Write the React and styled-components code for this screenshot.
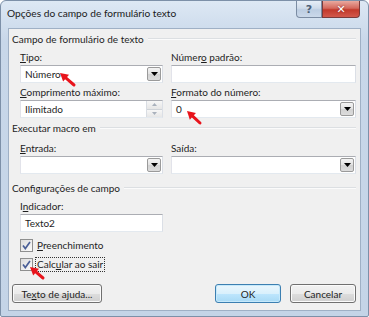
import React from 'react';
import styled, { createGlobalStyle } from 'styled-components';

const GlobalStyle = createGlobalStyle`
  body { margin: 0; background: #fff; }
`;

const FONT = `"Lato", "Liberation Sans", sans-serif`;

const Window = styled.div`
  position: relative;
  width: 369px;
  height: 317px;
  box-sizing: border-box;
  display: flex;
  flex-direction: column;
  background: linear-gradient(#dde8f4, #c8d7e9 40px, #c4d4e7);
  border: 1px solid #7d90a8;
  border-radius: 6px 6px 2px 2px;
  font-family: ${FONT};
  font-size: 10px;
  color: #1e1e1e;
  overflow: hidden;
`;

const TitleBar = styled.div`
  height: 27px;
  display: flex;
  align-items: flex-start;
  flex-shrink: 0;
`;

const Caption = styled.div`
  flex: 1;
  padding: 5px 0 0 6px;
  font-size: 10.2px;
  line-height: 14px;
  color: #1a1a1a;
`;

const CaptionButtons = styled.div`
  display: flex;
  margin-right: 8px;
`;

const CaptionButton = styled.div`
  width: ${p => p.$w}px;
  height: 17px;
  box-sizing: border-box;
  display: flex;
  align-items: center;
  justify-content: center;
  border: 1px solid ${p => (p.$close ? '#7a3a3a' : '#7b8ca3')};
  border-top: none;
  border-radius: ${p => (p.$close ? '0 0 4px 0' : '0 0 0 4px')};
  background: ${p =>
    p.$close
      ? 'linear-gradient(#e9a99f, #d4695d 45%, #c2392b 55%, #d2584c)'
      : 'linear-gradient(#e6eef7, #cfdbea 45%, #bccde2 55%, #cbd9ea)'};
  color: ${p => (p.$close ? '#fff' : '#4d5f77')};
  font-family: "DejaVu Sans", sans-serif;
  font-weight: bold;
  font-size: ${p => (p.$close ? 11 : 11)}px;
  text-shadow: ${p => (p.$close ? '0 0 2px #7a2018' : 'none')};
`;

const Client = styled.div`
  flex: 1;
  margin: 0 7px 5px 7px;
  background: #f0f0f0;
  border: 1px solid #9fb0c5;
  padding: 3px 4px 0 3px;
  display: flex;
  flex-direction: column;
`;

const GroupHeader = styled.div`
  display: flex;
  align-items: center;
  gap: 4px;
  height: 14px;
  line-height: 14px;
  margin-top: ${p => p.$mt || 0}px;
  &::after {
    content: '';
    flex: 1;
    height: 0;
    border-top: 1px solid #dcdfe2;
    border-bottom: 1px solid #fbfbfb;
  }
`;

const Section = styled.div`
  padding-left: 8px;
  margin-top: ${p => p.$mt || 0}px;
`;

const FieldGrid = styled.div`
  display: grid;
  grid-template-columns: 143px 185px;
  column-gap: 8px;
  row-gap: 2px;
`;

const Field = styled.div`
  display: flex;
  flex-direction: column;
  width: ${p => (p.$w ? `${p.$w}px` : 'auto')};
`;

const Label = styled.div`
  height: 14px;
  line-height: 14px;
  white-space: nowrap;
`;

const U = styled.span`
  text-decoration: underline;
  text-underline-offset: 1px;
`;

const Input = styled.div`
  margin-top: 1px;
  height: 18px;
  box-sizing: border-box;
  display: flex;
  align-items: center;
  background: #fff;
  border: 1px solid #abadb3;
  border-color: #abadb3 #dbdfe6 #e3e9ef #e2e3ea;
  padding-left: 4px;
  line-height: 14px;
`;

const InputText = styled.div`
  flex: 1;
`;

const DropButton = styled.div`
  width: 14px;
  height: 14px;
  margin-right: 1px;
  box-sizing: border-box;
  border: 1px solid #9a9a9a;
  border-radius: 2px;
  background: linear-gradient(#f4f4f4, #e2e2e2 50%, #d2d2d2 51%, #dcdcdc);
  display: flex;
  align-items: center;
  justify-content: center;
`;

const SpinStack = styled.div`
  width: 15px;
  height: 16px;
  display: flex;
  flex-direction: column;
  border-left: 1px solid #d9dde3;
`;

const SpinHalf = styled.div`
  flex: 1;
  display: flex;
  align-items: center;
  justify-content: center;
  background: linear-gradient(#f7f7f7, #e6e6e6);
  border-bottom: ${p => (p.$top ? '1px solid #cfd3d8' : 'none')};
`;

const CheckRow = styled.div`
  display: flex;
  align-items: center;
  gap: 2px;
  height: 14px;
  margin-top: ${p => p.$mt || 0}px;
`;

const CheckBox = styled.div`
  width: 13px;
  height: 13px;
  box-sizing: border-box;
  border: 1px solid #8e8f8f;
  background: linear-gradient(135deg, #dcdcdc, #fbfbfb);
  display: flex;
  align-items: center;
  justify-content: center;
`;

const CheckLabel = styled.div`
  line-height: 13px;
  padding: 0 1px;
  border: 1px ${p => (p.$focus ? 'dotted #333' : 'solid transparent')};
`;

const ButtonRow = styled.div`
  display: flex;
  align-items: center;
  margin-top: 13px;
  gap: 9px;
`;

const Spacer = styled.div`
  flex: 1;
`;

const Button = styled.div`
  width: ${p => p.$w}px;
  height: 19px;
  box-sizing: border-box;
  display: flex;
  align-items: center;
  justify-content: center;
  border: 1px solid ${p => (p.$default ? '#3c7fb1' : '#707070')};
  border-radius: 3px;
  box-shadow: inset 0 0 0 1px ${p => (p.$default ? '#c6e9fb' : '#fbfbfb')};
  background: ${p =>
    p.$default
      ? 'linear-gradient(#eaf6fd, #d9f0fc 50%, #bee6fd 51%, #a7d9f5)'
      : 'linear-gradient(#f2f2f2, #ebebeb 50%, #dddddd 51%, #cfcfcf)'};
  white-space: nowrap;
`;

const Overlay = styled.svg`
  position: absolute;
  left: 0;
  top: 0;
  pointer-events: none;
`;

function Caret({ color = '#000' }) {
  return (
    <svg width="7" height="4" viewBox="0 0 7 4">
      <path d="M0 0H7L3.5 4Z" fill={color} />
    </svg>
  );
}

function Combo({ value }) {
  return (
    <Input>
      <InputText>{value}</InputText>
      <DropButton>
        <Caret />
      </DropButton>
    </Input>
  );
}

function Spinner({ value }) {
  return (
    <Input>
      <InputText>{value}</InputText>
      <SpinStack>
        <SpinHalf $top>
          <svg width="5" height="3" viewBox="0 0 5 3"><path d="M0 3H5L2.5 0Z" fill="#a9b1bc" /></svg>
        </SpinHalf>
        <SpinHalf>
          <svg width="5" height="3" viewBox="0 0 5 3"><path d="M0 0H5L2.5 3Z" fill="#a9b1bc" /></svg>
        </SpinHalf>
      </SpinStack>
    </Input>
  );
}

function Check({ children, focus, mt }) {
  return (
    <CheckRow $mt={mt}>
      <CheckBox>
        <svg width="9" height="9" viewBox="0 0 9 9">
          <path d="M1 4.5L3.3 7.5L8 1" fill="none" stroke="#4a5f97" strokeWidth="1.7" />
        </svg>
      </CheckBox>
      <CheckLabel $focus={focus}>{children}</CheckLabel>
    </CheckRow>
  );
}

function arrowPath(tx, ty, hx, hy) {
  const dx = hx - tx;
  const dy = hy - ty;
  const len = Math.hypot(dx, dy);
  const ux = dx / len;
  const uy = dy / len;
  const size = 8;
  const bx = hx - ux * size;
  const by = hy - uy * size;
  const px = -uy * 4.5;
  const py = ux * 4.5;
  return {
    line: `M${tx} ${ty}L${bx} ${by}`,
    head: `M${hx} ${hy}L${bx + px} ${by + py}L${bx - px} ${by - py}Z`,
  };
}

const arrows = [
  [73, 84, 59, 72],
  [199, 122, 186, 110],
  [42, 277, 29, 266],
];

export default function App() {
  return (
    <>
      <GlobalStyle />
      <Window>
        <TitleBar>
          <Caption>Opções do campo de formulário texto</Caption>
          <CaptionButtons>
            <CaptionButton $w={26}>?</CaptionButton>
            <CaptionButton $w={38} $close>✕</CaptionButton>
          </CaptionButtons>
        </TitleBar>
        <Client>
          <GroupHeader>Campo de formulário de texto</GroupHeader>
          <Section $mt={4}>
            <FieldGrid>
              <Field>
                <Label><U>T</U>ipo:</Label>
                <Combo value="Número" />
              </Field>
              <Field>
                <Label>Númer<U>o</U> padrão:</Label>
                <Input />
              </Field>
              <Field>
                <Label><U>C</U>omprimento máximo:</Label>
                <Spinner value="Ilimitado" />
              </Field>
              <Field>
                <Label><U>F</U>ormato do número:</Label>
                <Combo value="0" />
              </Field>
            </FieldGrid>
          </Section>
          <GroupHeader $mt={3}>Executar macro em</GroupHeader>
          <Section $mt={6}>
            <FieldGrid>
              <Field>
                <Label><U>E</U>ntrada:</Label>
                <Combo value="" />
              </Field>
              <Field>
                <Label>Saída:</Label>
                <Combo value="" />
              </Field>
            </FieldGrid>
          </Section>
          <GroupHeader $mt={7}>Configurações de campo</GroupHeader>
          <Section $mt={4}>
            <Field $w={143}>
              <Label>I<U>n</U>dicador:</Label>
              <Input>Texto2</Input>
            </Field>
            <Check mt={6}><U>P</U>reenchimento</Check>
            <Check mt={5} focus>Calc<U>u</U>lar ao sair</Check>
          </Section>
          <ButtonRow>
            <Button $w={90}>Te<U>x</U>to de ajuda...</Button>
            <Spacer />
            <Button $w={66} $default>OK</Button>
            <Button $w={66}>Cancelar</Button>
          </ButtonRow>
        </Client>
        <Overlay width="369" height="317" viewBox="0 0 369 317">
          {arrows.map(([tx, ty, hx, hy], i) => {
            const a = arrowPath(tx, ty, hx, hy);
            return (
              <g key={i}>
                <path d={a.line} stroke="#e8141c" strokeWidth="3" strokeLinecap="round" />
                <path d={a.head} fill="#e8141c" />
              </g>
            );
          })}
        </Overlay>
      </Window>
    </>
  );
}
